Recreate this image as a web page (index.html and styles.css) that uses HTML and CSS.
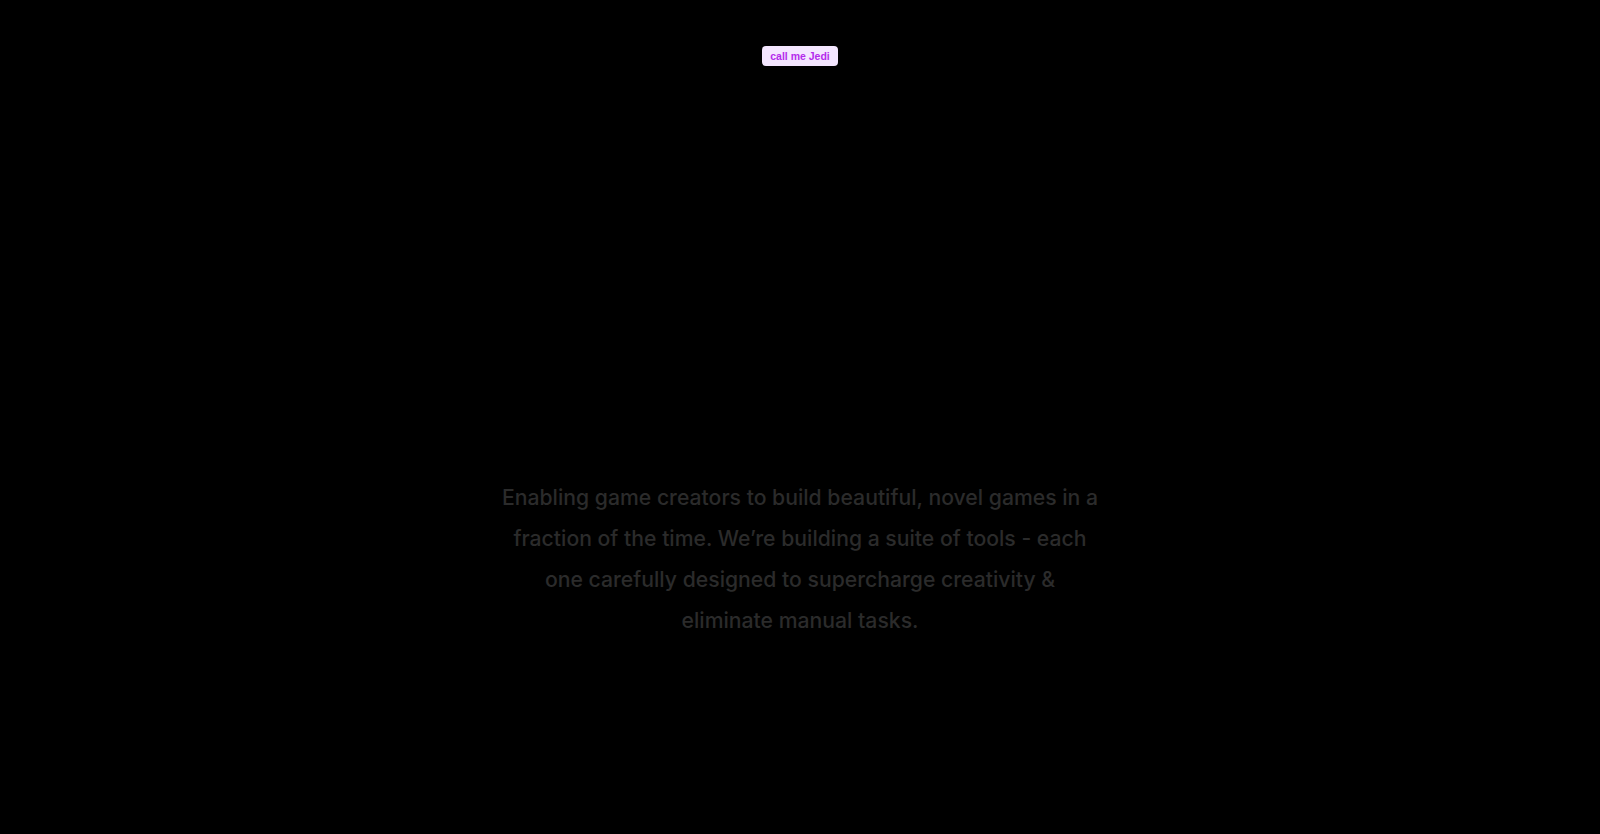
FILE: index.html
```html
<!DOCTYPE html>
<html lang="en">
<head>
<meta charset="utf-8">
<title>Jedi</title>
<link rel="stylesheet" href="styles.css">
</head>
<body>
<div class="page">
  <header class="top">
    <button class="tag">call me Jedi</button>
  </header>
  <main class="hero">
    <p class="lead">Enabling game creators to build beautiful, novel games in a fraction of the time. We’re building a suite of tools - each one carefully designed to supercharge creativity &amp; eliminate manual tasks.</p>
  </main>
</div>
</body>
</html>
```

FILE: styles.css
```css
html, body {
  margin: 0;
  padding: 0;
  background: #000;
}
.page {
  width: 1600px;
  height: 834px;
  display: flex;
  flex-direction: column;
  align-items: center;
  font-family: Inter, "Liberation Sans", sans-serif;
}
.top {
  padding-top: 46px;
  display: flex;
  justify-content: center;
}
.tag {
  height: 20px;
  width: 76px;
  padding: 0;
  border: none;
  border-radius: 4px;
  background: #f4e6ff;
  color: #b42cec;
  font-family: "Liberation Sans", Arial, sans-serif;
  font-weight: 700;
  font-size: 10.5px;
  line-height: 20px;
  text-align: center;
}
.hero {
  padding-top: 411px;
  display: flex;
  justify-content: center;
}
.lead {
  margin: 0;
  width: 606px;
  text-align: center;
  color: #2b2b2b;
  font-size: 21.2px;
  font-weight: 500;
  line-height: 41px;
  letter-spacing: 0;
}
```
